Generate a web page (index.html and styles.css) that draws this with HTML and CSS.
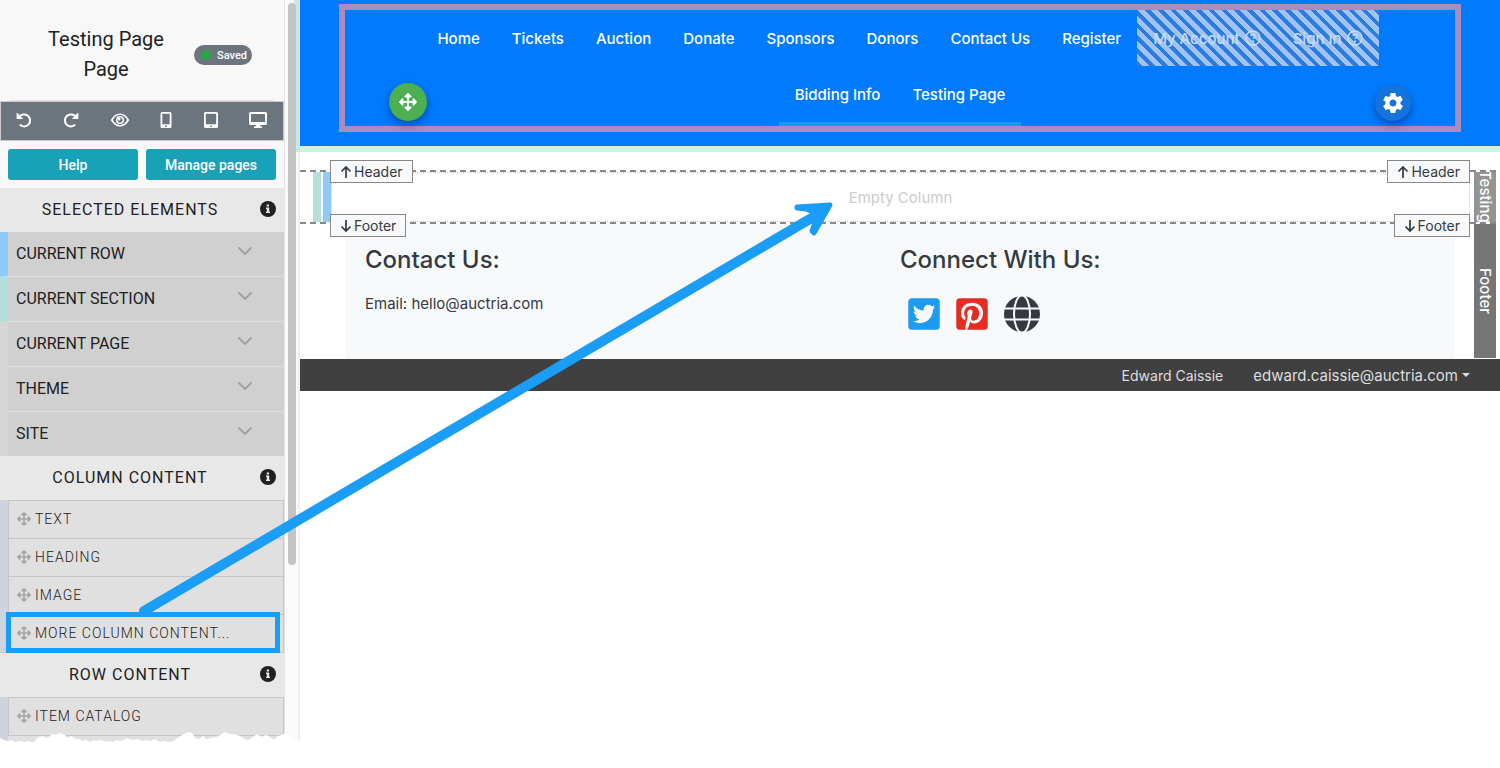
FILE: index.html
```html
<!DOCTYPE html>
<html lang="en">
<head>
<meta charset="utf-8">
<title>Testing Page</title>
<link rel="stylesheet" href="styles.css">
</head>
<body>
<svg class="defs" aria-hidden="true">
  <symbol id="move" viewBox="0 0 512 512"><path d="M352.201 425.775l-79.196 79.196c-9.373 9.373-24.568 9.373-33.941 0l-79.196-79.196c-15.119-15.119-4.411-40.971 16.971-40.97h51.162L228 284H127.196v51.162c0 21.382-25.851 32.09-40.971 16.971L7.029 272.937c-9.373-9.373-9.373-24.569 0-33.941L86.225 159.8c15.119-15.119 40.971-4.411 40.971 16.971V228H228V127.196h-51.23c-21.382 0-32.09-25.851-16.971-40.971l79.196-79.196c9.373-9.373 24.568-9.373 33.941 0l79.196 79.196c15.119 15.119 4.411 40.971-16.971 40.971h-51.162V228h100.804v-51.162c0-21.382 25.851-32.09 40.97-16.971l79.196 79.196c9.373 9.373 9.373 24.569 0 33.941L425.773 352.2c-15.119 15.119-40.971 4.411-40.97-16.971V284H284v100.804h51.23c21.382 0 32.09 25.851 16.971 40.971z"/></symbol>
  <symbol id="info" viewBox="0 0 16 16"><circle cx="8" cy="8" r="8"/><path fill="#e8e8e8" d="M6.700 3.400h2.300v2.200H6.700zM6 6.600h3.200v4.200h.8V12H6v-1.200h.8V7.900H6z"/></symbol>
  <symbol id="chevron" viewBox="0 0 14 8"><path d="M1 1l6 6 6-6" fill="none" stroke="#a0a0a0" stroke-width="1.800" stroke-linecap="round" stroke-linejoin="round"/></symbol>
  <symbol id="up" viewBox="0 0 12 14"><path d="M6 13V2M1.500 6.500L6 2l4.500 4.500" fill="none" stroke="#343a40" stroke-width="1.700"/></symbol>
  <symbol id="down" viewBox="0 0 12 14"><path d="M6 1v11M1.500 7.500L6 12l4.500-4.500" fill="none" stroke="#343a40" stroke-width="1.700"/></symbol>
  <symbol id="question" viewBox="0 0 16 16"><circle cx="8" cy="8" r="7" fill="none" stroke="currentColor" stroke-width="1.400"/><path d="M5.900 6.200c.2-1.300 1-1.900 2.200-1.900s2.200.8 2.200 1.800c0 1.600-2.100 1.500-2.100 3" fill="none" stroke="currentColor" stroke-width="1.500"/><circle cx="8.200" cy="11.200" r="1" fill="currentColor"/></symbol>
</svg>
<div class="app">
  <aside class="sidebar">
    <div class="panel">
      <div class="page-head">
        <h1 class="page-title">Testing Page Page</h1>
        <span class="saved"><i class="saved-dot"></i>Saved</span>
      </div>
      <div class="toolbar">
        <button type="button" aria-label="Undo"><svg width="16" height="16" viewBox="0 0 16 16"><path d="M3 5.200A6 6 0 1 1 3.800 12.600" fill="none" stroke="#fff" stroke-width="2"/><path d="M.6 1v6h6V5.600L5 5.400 2.200 1.600z" fill="#fff"/></svg></button>
        <button type="button" aria-label="Redo"><svg width="16" height="16" viewBox="0 0 16 16"><path d="M13 5.200A6 6 0 1 0 12.200 12.600" fill="none" stroke="#fff" stroke-width="2"/><path d="M15.400 1v6h-6V5.600l1.600-.2 2.800-3.800z" fill="#fff"/></svg></button>
        <button type="button" aria-label="Preview"><svg width="18" height="16" viewBox="0 0 18 16"><path d="M.8 8C2.800 4.300 5.700 2.300 9 2.300S15.200 4.300 17.200 8C15.200 11.700 12.300 13.700 9 13.700S2.800 11.700.8 8z" fill="none" stroke="#fff" stroke-width="1.600"/><circle cx="9" cy="8" r="3.300" fill="none" stroke="#fff" stroke-width="1.500"/><circle cx="8" cy="7" r="1.500" fill="#fff"/></svg></button>
        <button type="button" aria-label="Phone"><svg width="12" height="16" viewBox="0 0 12 16"><path fill="#fff" fill-rule="evenodd" d="M2 0h8a1.500 1.500 0 0 1 1.500 1.500v13A1.500 1.500 0 0 1 10 16H2a1.500 1.500 0 0 1-1.500-1.500v-13A1.500 1.500 0 0 1 2 0zm.3 1.800v10.400h7.400V1.800zM6 13.200a1 1 0 1 0 0 2 1 1 0 0 0 0-2z"/></svg></button>
        <button type="button" aria-label="Tablet"><svg width="14" height="16" viewBox="0 0 14 16"><path fill="#fff" fill-rule="evenodd" d="M1.500 0h11A1.500 1.500 0 0 1 14 1.500v13a1.500 1.500 0 0 1-1.500 1.500h-11A1.500 1.500 0 0 1 0 14.500v-13A1.500 1.500 0 0 1 1.500 0zm.3 1.800v10.400h10.400V1.800zM7 13.200a.9.9 0 1 0 0 1.800.9.9 0 0 0 0-1.800z"/></svg></button>
        <button type="button" aria-label="Desktop"><svg width="18" height="16" viewBox="0 0 18 16"><path fill="#fff" fill-rule="evenodd" d="M1.500 0h15A1.500 1.500 0 0 1 18 1.500v10a1.500 1.500 0 0 1-1.500 1.500H11l.5 1.500H13V16H5v-1.500h1.500L7 13H1.500A1.500 1.500 0 0 1 0 11.500v-10A1.500 1.500 0 0 1 1.500 0zM2 2v8h14V2z"/></svg></button>
      </div>
      <div class="actions">
        <button type="button" class="action">Help</button>
        <button type="button" class="action">Manage pages</button>
      </div>
      <div class="group-head"><h2>SELECTED ELEMENTS</h2><svg width="16" height="16"><use href="#info"/></svg></div>
      <div class="accordion">
        <button type="button" class="fold fold-row">CURRENT ROW<svg width="14" height="8"><use href="#chevron"/></svg></button>
        <button type="button" class="fold fold-section">CURRENT SECTION<svg width="14" height="8"><use href="#chevron"/></svg></button>
        <button type="button" class="fold">CURRENT PAGE<svg width="14" height="8"><use href="#chevron"/></svg></button>
        <button type="button" class="fold">THEME<svg width="14" height="8"><use href="#chevron"/></svg></button>
        <button type="button" class="fold">SITE<svg width="14" height="8"><use href="#chevron"/></svg></button>
      </div>
      <div class="group-head"><h2>COLUMN CONTENT</h2><svg width="16" height="16"><use href="#info"/></svg></div>
      <ul class="blocks">
        <li><svg width="14" height="14"><use href="#move"/></svg>TEXT</li>
        <li><svg width="14" height="14"><use href="#move"/></svg>HEADING</li>
        <li><svg width="14" height="14"><use href="#move"/></svg>IMAGE</li>
        <li><svg width="14" height="14"><use href="#move"/></svg>MORE COLUMN CONTENT...</li>
      </ul>
      <div class="group-head"><h2>ROW CONTENT</h2><svg width="16" height="16"><use href="#info"/></svg></div>
      <ul class="blocks blocks-cut">
        <li><svg width="14" height="14"><use href="#move"/></svg>ITEM CATALOG</li>
      </ul>
    </div>
    <div class="gutter"><div class="thumb"></div></div>
    <svg class="torn" viewBox="0 0 300 14" preserveAspectRatio="none" aria-hidden="true"><path fill="#fff" d="M0 6L4 8 8 9 12 8 15 10 20 9 24 10 28 9 30 10 34 10 37 6 40 5 43 4 46 6 49 5 52 2 56 3 60 1 65 3 67 6 71 4 75 7 79 7 83 9 86 8 90 10 93 8 97 9 101 8 106 10 109 9 113 10 117 8 121 9 127 6 133 8 137 7 142 9 147 8 151 9 155 7 160 10 164 9 169 10 174 9 179 5 184 2 188 0 192 1 195 6 199 7 203 4 207 7 211 6 217 5 222 2 225 0 229 2 234 2 240 4 244 7 248 8 253 5 257 2 261 5 266 3 270 5 274 8 278 4 282 3 286 1 290 3 293 7 296 6 300 9V14H0z"/></svg>
  </aside>

  <main class="canvas">
    <header class="site-header">
      <div class="header-frame">
        <nav>
          <ul class="nav">
            <li><a href="#">Home</a></li><li><a href="#">Tickets</a></li><li><a href="#">Auction</a></li><li><a href="#">Donate</a></li><li><a href="#">Sponsors</a></li><li><a href="#">Donors</a></li><li><a href="#">Contact Us</a></li><li><a href="#">Register</a></li>
            <li class="hatched"><a href="#">My Account<svg width="16" height="16"><use href="#question"/></svg></a></li><li class="hatched"><a href="#">Sign In<svg width="16" height="16"><use href="#question"/></svg></a></li>
            <li class="marked"><a href="#">Bidding Info</a></li><li class="marked"><a href="#">Testing Page</a></li>
          </ul>
        </nav>
        <button type="button" class="fab fab-move" aria-label="Move"><svg width="18" height="18"><use href="#move"/></svg></button>
        <button type="button" class="fab fab-settings" aria-label="Settings"><svg width="24" height="24" viewBox="0 0 24 24"><path fill="#fff" d="M19.43 12.98c.04-.32.07-.64.07-.98s-.03-.66-.07-.98l2.110-1.650c.19-.15.24-.42.12-.64l-2-3.460c-.12-.22-.39-.3-.61-.22l-2.490 1c-.52-.4-1.080-.73-1.690-.98l-.38-2.650C14.460 2.180 14.250 2 14 2h-4c-.25 0-.46.18-.49.42l-.38 2.650c-.61.25-1.170.59-1.690.98l-2.490-1c-.23-.09-.49 0-.61.22l-2 3.460c-.13.22-.07.49.12.64l2.110 1.650c-.04.32-.07.65-.07.98s.03.66.07.98l-2.110 1.650c-.19.15-.24.42-.12.64l2 3.460c.12.22.39.3.61.22l2.490-1c.52.4 1.080.73 1.690.98l.38 2.650c.03.24.24.42.49.42h4c.25 0 .46-.18.49-.42l.38-2.650c.61-.25 1.170-.59 1.690-.98l2.490 1c.23.09.49 0 .61-.22l2-3.460c.12-.22.07-.49-.12-.64l-2.110-1.650zM12 15.500c-1.930 0-3.500-1.570-3.500-3.500s1.570-3.500 3.500-3.500 3.500 1.570 3.500 3.500-1.570 3.500-3.500 3.500z"/></svg></button>
      </div>
    </header>

    <section class="region region-page">
      <span class="tag tag-top tag-left"><svg width="12" height="14"><use href="#up"/></svg>Header</span>
      <span class="tag tag-top tag-right"><svg width="12" height="14"><use href="#up"/></svg>Header</span>
      <div class="strips"><i class="strip-section"></i><i class="strip-row"></i></div>
      <div class="column">Empty Column</div>
      <div class="side-tab side-tab-page">Testing</div>
    </section>

    <section class="region region-footer">
      <span class="tag tag-bottom tag-left"><svg width="12" height="14"><use href="#down"/></svg>Footer</span>
      <span class="tag tag-bottom tag-right"><svg width="12" height="14"><use href="#down"/></svg>Footer</span>
      <div class="footer-body">
        <div class="footer-col">
          <h2>Contact Us:</h2>
          <p>Email: hello@auctria.com</p>
        </div>
        <div class="footer-col">
          <h2>Connect With Us:</h2>
          <div class="social">
            <a href="#" aria-label="Twitter"><svg width="32" height="36" viewBox="0 0 448 512"><path fill="#1d9bf0" d="M400 32H48C21.500 32 0 53.500 0 80v352c0 26.500 21.500 48 48 48h352c26.500 0 48-21.500 48-48V80c0-26.500-21.500-48-48-48zm-48.900 158.800c.2 2.800.2 5.700.2 8.500 0 86.700-66 186.600-186.600 186.600-37.200 0-71.700-10.800-100.700-29.400 5.300.6 10.400.8 15.800.8 30.700 0 58.900-10.400 81.400-28-28.800-.6-53-19.500-61.300-45.500 10.100 1.500 19.200 1.500 29.600-1.200-30-6.100-52.500-32.500-52.500-64.400v-.8c8.700 4.900 18.900 7.900 29.600 8.300a65.447 65.447 0 0 1-29.200-54.600c0-12.200 3.200-23.400 8.900-33.100 32.300 39.800 80.800 65.800 135.200 68.600-9.300-44.500 24-80.600 64-80.600 18.900 0 35.900 7.900 47.900 20.700 14.800-2.800 29-8.300 41.600-15.800-4.900 15.200-15.200 28-28.800 36.100 13.200-1.400 26-5.100 37.800-10.200-8.900 13.100-20.100 24.700-32.900 34z"/></svg></a>
            <a href="#" aria-label="Pinterest"><svg width="32" height="36" viewBox="0 0 448 512"><path fill="#e62b23" d="M448 80v352c0 26.500-21.500 48-48 48H154.400c9.800-16.400 22.400-40 27.400-59.300 3-11.500 15.300-58.400 15.300-58.400 8 15.300 31.400 28.200 56.300 28.200 74.100 0 127.400-68.100 127.400-152.700 0-81.100-66.200-141.800-151.400-141.800-106 0-162.200 71.100-162.200 148.600 0 36 19.200 80.800 49.800 95.100 4.700 2.200 7.100 1.200 8.200-3.300.8-3.400 5-20.100 6.800-27.800.6-2.500.3-4.600-1.700-7-10.100-12.300-18.300-34.900-18.300-56 0-54.200 41-106.600 110.900-106.600 60.300 0 102.600 41.100 102.600 99.900 0 66.400-33.500 112.400-77.200 112.400-24.100 0-42.100-19.900-36.400-44.400 6.900-29.200 20.300-60.700 20.300-81.800 0-53-75.500-45.700-75.500 25 0 21.700 7.300 36.500 7.300 36.500-31.400 132.800-36.100 134.500-29.600 192.600l2.200.8H48c-26.500 0-48-21.500-48-48V80c0-26.500 21.500-48 48-48h352c26.500 0 48 21.500 48 48z"/></svg></a>
            <a href="#" aria-label="Website"><svg width="36" height="36" viewBox="0 0 36 36"><circle cx="18" cy="18" r="18" fill="#343a40"/><g fill="none" stroke="#f8f9fb" stroke-width="2"><ellipse cx="18" cy="18" rx="8" ry="18.600"/><path d="M0 12.500h36M0 23.500h36"/></g></svg></a>
          </div>
        </div>
      </div>
      <div class="side-tab side-tab-footer">Footer</div>
    </section>

    <div class="user-bar">
      <span class="user-name">Edward Caissie</span>
      <button type="button" class="account">edward.caissie@auctria.com<i class="caret"></i></button>
    </div>
  </main>
  <svg class="annotation" width="860" height="680" viewBox="0 0 860 680" aria-hidden="true">
    <g fill="none" stroke="#1a9df6">
      <path d="M144 611L820 213" stroke-width="10" stroke-linecap="round"/>
      <path d="M797 207L830 205 814 233 812 231 818 214 806 209 797 208z" fill="#1a9df6" stroke-width="5" stroke-linejoin="round"/>
      <path d="M8.500 614.500h269v36h-269z" stroke-width="5"/>
    </g>
  </svg>
</div>
</body>
</html>
```

FILE: styles.css
```css
* { box-sizing: border-box; }
body { margin: 0; background: #fff; font-family: Inter, "Liberation Sans", sans-serif; font-size: 15px; color: #343a40; }
h1, h2, p, ul { margin: 0; padding: 0; }
ul { list-style: none; }
svg { flex: none; }
button { margin: 0; padding: 0; border: 0; background: none; font: inherit; color: inherit; cursor: pointer; }
.defs { position: absolute; width: 0; height: 0; }
.app { position: relative; display: flex; align-items: flex-start; }

/* Sidebar */
.sidebar { position: relative; flex: none; display: flex; width: 300px; overflow: hidden; font-family: Roboto, sans-serif; color: #212121; background: #fafafa; }
.panel { flex: 1; background: #f8f8f8; border-right: 1px solid #e4e4e4; }
.gutter { width: 15px; padding: 3px 4px 0 3px; border-right: 2px solid #eee; }
.thumb { width: 8px; height: 562px; border-radius: 4px; background: #c4c4c4; position: relative; z-index: 2; }
.torn { position: absolute; left: 0; bottom: 0; width: 100%; height: 14px; z-index: 3; }
.page-head { display: flex; align-items: center; height: 101px; margin: 0 10px; padding: 8px 22px 0 20px; border-bottom: 1px solid #e2e2e2; }
.page-title { flex: 1; padding: 0 14px 0 2px; font-size: 20px; line-height: 30px; font-weight: 400; text-align: center; }
.saved { display: flex; align-items: center; gap: 6px; height: 20px; margin-top: 2px; padding: 0 5px 0 7px; border-radius: 10px; background: #6c757d; color: #fff; font-size: 11px; font-weight: 500; }
.saved-dot { width: 10px; height: 10px; border-radius: 50%; background: #28a745; }
.toolbar { display: flex; align-items: center; justify-content: space-between; height: 40px; padding: 0 16px 2px 15px; background: #6c757d; border: 1px solid #d0caca; }
.toolbar button { display: flex; }
.actions { display: flex; gap: 8px; padding: 8px 8px 8px 8px; }
.action { flex: 1; height: 31px; border-radius: 3px; background: #17a2b8; color: #fff; font-size: 14px; font-weight: 500; }
.group-head { display: flex; align-items: center; height: 44px; padding: 0 8px 2px 0; background: #e8e8e8; }
.group-head h2 { flex: 1; font-size: 16px; font-weight: 400; letter-spacing: 1px; text-align: center; }
.group-head svg { fill: #212121; }
.fold { display: flex; align-items: center; justify-content: space-between; width: 100%; height: 45px; padding: 0 32px 2px 8px; border-left: 8px solid #d6d6d6; border-bottom: 1px solid #dedede; background: #d0d0d0; font-size: 16px; text-align: left; }
.fold svg { margin-bottom: 5px; }
.fold:last-child { height: 44px; border-bottom: 0; }
.fold-row { border-left-color: #90caf9; }
.fold-section { border-left-color: #b2dfdb; }
.blocks { border-left: 8px solid #ced4dd; border-bottom: 1px solid #c6c6c6; }
.blocks li { display: flex; align-items: center; gap: 4px; height: 38px; padding: 0 0 2px 8px; border: 1px solid #c6c6c6; border-bottom: 0; background: #e0e0e0; font-size: 14px; font-weight: 300; letter-spacing: 1px; }
.blocks svg { fill: #a5a5a5; }
.blocks-cut { padding-bottom: 11px; border-bottom: 0; background: linear-gradient(#c6c6c6, #c6c6c6) 0 38px / 100% 1px no-repeat #e0e0e0; }

/* Page canvas */
.canvas { flex: 1; min-width: 0; }
.site-header { position: relative; padding: 4px 39px 14px; background: #007bff; border-bottom: 6px solid #d4ecea; }
.site-header::before { content: ""; position: absolute; left: -6px; top: 0; bottom: -6px; width: 6px; background: #c9e7e5; }
.header-frame { position: relative; max-width: 1122px; margin: 0 auto; border: 6px solid #a78dc0; }
.nav { display: flex; flex-wrap: wrap; justify-content: center; padding: 0 72px; }
.nav a { display: flex; align-items: center; gap: 5px; height: 56px; padding: 0 16px; color: #fff; font-weight: 500; text-decoration: none; }
.nav .marked { height: 60px; border-bottom: 4px solid #2196f3; }
.hatched { background: repeating-linear-gradient(45deg, #2c7be0 0 4px, #a0c3f2 4px 9px); }
.nav .hatched a { color: #c8dbf6; }
.fab { position: absolute; display: flex; align-items: center; justify-content: center; border-radius: 50%; box-shadow: 0 4px 8px rgba(0, 0, 0, .35); }
.fab-move { left: 44px; bottom: 5px; width: 38px; height: 38px; background: #4caf50; fill: #fff; }
.fab-settings { right: 44px; bottom: 5px; width: 36px; height: 36px; background: #1473dc; }

.region { position: relative; display: flex; }
.region::before { content: ""; position: absolute; left: 0; right: 0; top: 0; height: 2px; background: repeating-linear-gradient(90deg, #888 0 6px, #fff 6px 10px); }
.region-page { height: 52px; margin-top: 18px; padding-right: 4px; }
.region-footer { padding-right: 4px; }
.strips { display: flex; gap: 2px; margin: 2px 0 0 13px; }
.strip-section, .strip-row { width: 8px; background: #b2dfdb; }
.strip-row { background: #90caf9; }
.column { flex: 1; display: flex; align-items: center; justify-content: center; margin: 2px 4px 0 0; border: 1px dotted #ccc; color: #ccc; }
.side-tab { display: flex; align-items: center; justify-content: center; width: 22px; overflow: hidden; writing-mode: vertical-rl; color: #fff; font-weight: 500; line-height: 22px; }
.side-tab-page { background: #949494; }
.side-tab-footer { margin: 2px 0 1px; background: #757575; }
.tag { position: absolute; z-index: 1; display: flex; align-items: center; gap: 2px; height: 23px; padding: 0 9px; border: 1px solid #888; background: #f8f9fb; font-size: 14px; }
.tag-top { top: -10px; }
.tag-bottom { top: -8px; }
.tag-left { left: 30px; }
.tag-right { right: 30px; }
.footer-body { flex: 1; display: flex; max-width: 1110px; margin: 0 19px 0 45px; padding: 18px 20px 23px; background: #f8f9fb; }
.footer-col { flex: 1; }
.footer-col h2 { font-size: 24px; line-height: 40px; font-weight: 500; }
.footer-col p { margin-top: 12px; line-height: 24px; }
.social { display: flex; gap: 16px; padding: 16px 0 4px 8px; }
.social a { display: flex; }
.user-bar { display: flex; align-items: center; justify-content: flex-end; gap: 30px; height: 32px; padding-right: 30px; background: #404040; color: #dedede; }
.user-name { font-size: 14px; }
.account { display: flex; align-items: center; gap: 4px; }
.caret { border: 4px solid transparent; border-top-color: #dedede; border-bottom: 0; }

/* Drag hint drawn over the editor */
.annotation { position: absolute; left: 0; top: 0; z-index: 5; pointer-events: none; }
```
